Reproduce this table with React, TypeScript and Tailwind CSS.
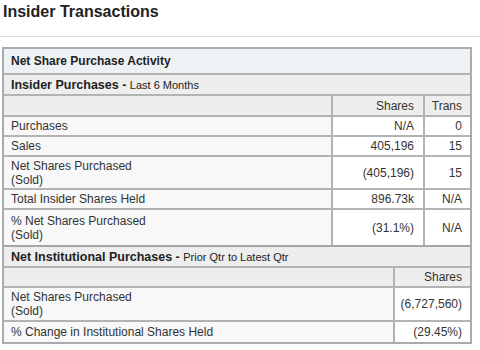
import React from 'react';

type Row = {
    label: string[];
    shares: string;
    trans?: string;
    h: string;
};

const insiderRows: Row[] = [
    { label: ['Purchases'], shares: 'N/A', trans: '0', h: 'h-[20px]' },
    { label: ['Sales'], shares: '405,196', trans: '15', h: 'h-[20px]' },
    { label: ['Net Shares Purchased', '(Sold)'], shares: '(405,196)', trans: '15', h: 'h-[33px]' },
    { label: ['Total Insider Shares Held'], shares: '896.73k', trans: 'N/A', h: 'h-[20px]' },
    { label: ['% Net Shares Purchased', '(Sold)'], shares: '(31.1%)', trans: 'N/A', h: 'h-[37px]' },
];

const instRows: Row[] = [
    { label: ['Net Shares Purchased', '(Sold)'], shares: '(6,727,560)', h: 'h-[34px]' },
    { label: ['% Change in Institutional Shares Held'], shares: '(29.45%)', h: 'h-[20px]' },
];

export default function App() {
    return (
        <div className="w-[480px] h-[350px] bg-white text-[#333] font-['Liberation_Sans',Arial,sans-serif] overflow-hidden">
            <h1 className="pl-[3px] pt-[2px] h-[36px] text-[16px] leading-[20px] font-bold text-[#222]">
                Insider Transactions
            </h1>
            <div className="border-t border-[#dcdcdc]" />

            <div className="mt-[10px] ml-[2px] w-[470px] border-2 border-[#ababab] text-[12px] leading-[14px]">
                <div className="h-[26px] flex items-center pl-[7px] bg-[#edf2f5] border-b-2 border-[#b3b3b3] font-bold text-[#222]">
                    Net Share Purchase Activity
                </div>
                <div className="h-[21px] flex items-center pl-[7px] bg-[#eeeeee] border-b-2 border-[#b3b3b3] text-[#222]">
                    <span className="font-bold text-[12.5px]">Insider Purchases -&nbsp;</span>
                    <span className="text-[11px]">Last 6 Months</span>
                </div>
                <div className="h-[21px] flex bg-[#eeeeee] border-b-2 border-[#b3b3b3]">
                    <div className="w-[327px]" />
                    <div className="w-[92px] border-l-2 border-[#b3b3b3] flex items-center justify-end pr-[9px]">Shares</div>
                    <div className="w-[47px] border-l-2 border-[#b3b3b3] flex items-center justify-end pr-[8px]">Trans</div>
                </div>
                {insiderRows.map((r, i) => (
                    <div
                        key={i}
                        className={`${r.h} flex border-b-2 ${i === insiderRows.length - 1 ? 'border-[#a6a6a6]' : 'border-[#b3b3b3]'}`}
                    >
                        <div className="w-[327px] bg-[#f8f8f8] flex flex-col justify-center pl-[7px]">
                            {r.label.map((l) => (
                                <span key={l}>{l}</span>
                            ))}
                        </div>
                        <div className="w-[92px] bg-white border-l-2 border-[#b3b3b3] flex items-center justify-end pr-[9px]">
                            {r.shares}
                        </div>
                        <div className="w-[47px] bg-white border-l-2 border-[#b3b3b3] flex items-center justify-end pr-[8px]">
                            {r.trans}
                        </div>
                    </div>
                ))}

                <div className="h-[21px] flex items-center pl-[7px] bg-[#eeeeee] border-b-2 border-[#b3b3b3] text-[#222]">
                    <span className="font-bold text-[12.5px]">Net Institutional Purchases -&nbsp;</span>
                    <span className="text-[11px]">Prior Qtr to Latest Qtr</span>
                </div>
                <div className="h-[20px] flex bg-[#eeeeee] border-b-2 border-[#b3b3b3]">
                    <div className="w-[389px]" />
                    <div className="w-[77px] border-l-2 border-[#b3b3b3] flex items-center justify-end pr-[8px]">Shares</div>
                </div>
                {instRows.map((r, i) => (
                    <div
                        key={i}
                        className={`${r.h} flex ${i === instRows.length - 1 ? '' : 'border-b-2 border-[#b3b3b3]'}`}
                    >
                        <div className="w-[389px] bg-[#f8f8f8] flex flex-col justify-center pl-[7px]">
                            {r.label.map((l) => (
                                <span key={l}>{l}</span>
                            ))}
                        </div>
                        <div className="w-[77px] bg-white border-l-2 border-[#b3b3b3] flex items-center justify-end pr-[8px]">
                            {r.shares}
                        </div>
                    </div>
                ))}
            </div>
        </div>
    );
}
